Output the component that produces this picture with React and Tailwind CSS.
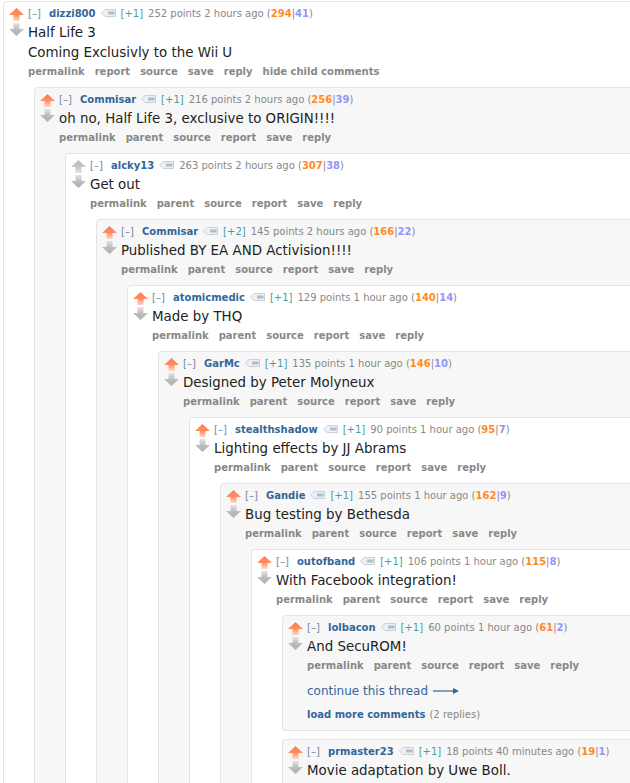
import React from "react";

function UpArrow({ on = true }) {
  const id = on ? "upOn" : "upOff";
  return (
    <svg width="15" height="14" viewBox="0 0 15 14" className="block">
      <defs>
        <linearGradient id={id} x1="0" y1="0" x2="0" y2="1">
          <stop offset="0" stopColor={on ? "#ff7f50" : "#bdbdbd"} />
          <stop offset="0.5" stopColor={on ? "#ff8b60" : "#c4c4c4"} />
          <stop offset="1" stopColor={on ? "#ffd9c8" : "#e6e6e6"} />
        </linearGradient>
      </defs>
      <polygon points="7.5,0 15,7 10.5,7 10.5,13 4.5,13 4.5,7 0,7" fill={`url(#${id})`} />
    </svg>
  );
}

function DownArrow() {
  return (
    <svg width="15" height="14" viewBox="0 0 15 14" className="block">
      <defs>
        <linearGradient id="dnG" x1="0" y1="0" x2="0" y2="1">
          <stop offset="0" stopColor="#e4e4e4" />
          <stop offset="0.5" stopColor="#bcbcbc" />
          <stop offset="1" stopColor="#b0b0b0" />
        </linearGradient>
      </defs>
      <polygon points="4.5,0 10.5,0 10.5,6 15,6 7.5,13 0,6 4.5,6" fill="url(#dnG)" />
    </svg>
  );
}

function TagIcon() {
  return (
    <svg width="15" height="8" viewBox="0 0 15 8" className="block shrink-0">
      <path d="M4 0.5 H14.5 V7.5 H4 L0.5 4 Z" fill="#eef1f4" stroke="#c9d0d8" strokeWidth="1" />
      <rect x="7" y="2.5" width="6.5" height="3" fill="#aebdcc" />
    </svg>
  );
}

function LongArrow() {
  return (
    <svg width="26" height="8" viewBox="0 0 26 8" className="block">
      <line x1="0" y1="4" x2="21" y2="4" stroke="#336699" strokeWidth="1.2" />
      <polygon points="20,1 26,4 20,7" fill="#336699" />
    </svg>
  );
}

const data = {
  user: "dizzi800",
  plus: "+1",
  meta: "252 points 2 hours ago",
  up: "294",
  down: "41",
  body: ["Half Life 3", "Coming Exclusivly to the Wii U"],
  top: true,
  children: [
    {
      user: "Commisar",
      plus: "+1",
      meta: "216 points 2 hours ago",
      up: "256",
      down: "39",
      body: ["oh no, Half Life 3, exclusive to ORIGIN!!!!"],
      children: [
        {
          user: "alcky13",
          plus: null,
          off: true,
          meta: "263 points 2 hours ago",
          up: "307",
          down: "38",
          body: ["Get out"],
          children: [
            {
              user: "Commisar",
              plus: "+2",
              meta: "145 points 2 hours ago",
              up: "166",
              down: "22",
              body: ["Published BY EA AND Activision!!!!"],
              children: [
                {
                  user: "atomicmedic",
                  plus: "+1",
                  meta: "129 points 1 hour ago",
                  up: "140",
                  down: "14",
                  body: ["Made by THQ"],
                  children: [
                    {
                      user: "GarMc",
                      plus: "+1",
                      meta: "135 points 1 hour ago",
                      up: "146",
                      down: "10",
                      body: ["Designed by Peter Molyneux"],
                      children: [
                        {
                          user: "stealthshadow",
                          plus: "+1",
                          meta: "90 points 1 hour ago",
                          up: "95",
                          down: "7",
                          body: ["Lighting effects by JJ Abrams"],
                          children: [
                            {
                              user: "Gandie",
                              plus: "+1",
                              meta: "155 points 1 hour ago",
                              up: "162",
                              down: "9",
                              body: ["Bug testing by Bethesda"],
                              children: [
                                {
                                  user: "outofband",
                                  plus: "+1",
                                  meta: "106 points 1 hour ago",
                                  up: "115",
                                  down: "8",
                                  body: ["With Facebook integration!"],
                                  children: [
                                    {
                                      user: "lolbacon",
                                      plus: "+1",
                                      meta: "60 points 1 hour ago",
                                      up: "61",
                                      down: "2",
                                      body: ["And SecuROM!"],
                                      more: true,
                                      children: [],
                                    },
                                    {
                                      user: "prmaster23",
                                      plus: "+1",
                                      meta: "18 points 40 minutes ago",
                                      up: "19",
                                      down: "1",
                                      body: ["Movie adaptation by Uwe Boll."],
                                      noButtons: true,
                                      children: [],
                                    },
                                  ],
                                },
                              ],
                            },
                          ],
                        },
                      ],
                    },
                  ],
                },
              ],
            },
          ],
        },
      ],
    },
  ],
};

function Comment({ c, level }) {
  const bg = level % 2 ? "bg-[#f7f7f7]" : "bg-white";
  const buttons = c.top
    ? ["permalink", "report", "source", "save", "reply", "hide child comments"]
    : ["permalink", "parent", "source", "report", "save", "reply"];
  return (
    <div
      className={`${bg} flex border border-r-0 border-[#e4e4e4] rounded-l-[4px] pl-[5px] pt-[3px] pb-[8px]`}
    >
      <div className="w-[15px] shrink-0 flex flex-col gap-[1px] mt-[3px]">
        <UpArrow on={!c.off} />
        <DownArrow />
      </div>
      <div className="ml-[4px] flex-1 min-w-0">
        <div className="h-[16px] flex items-center gap-[5px] text-[10px] whitespace-nowrap">
          <span className="w-[16px] text-[#7189a3]">[–]</span>
          <span className="font-bold text-[#336699]">{c.user}</span>
          <TagIcon />
          {c.plus && <span className="text-[#4d9aa0]">[{c.plus}]</span>}
          <span className="text-[#888888]">
            {c.meta} (<span className="font-bold text-[#ff8b24]">{c.up}</span>|
            <span className="font-bold text-[#9494ff]">{c.down}</span>)
          </span>
        </div>
        <div className="mt-[2px] text-[13.4px] leading-[20px] text-[#222222]">
          {c.body.map((p, i) => (
            <p key={i} className="whitespace-nowrap">{p}</p>
          ))}
        </div>
        {!c.noButtons && (
          <div className="h-[16px] flex items-center gap-[10px] text-[10px] font-bold text-[#888888] whitespace-nowrap">
            {buttons.map((b) => (
              <span key={b}>{b}</span>
            ))}
          </div>
        )}
        {c.more && (
          <>
            <div className="mt-[9px] h-[18px] flex items-center gap-[5px] text-[12px] text-[#336699]">
              <span>continue this thread</span>
              <LongArrow />
            </div>
            <div className="mt-[6px] h-[16px] flex items-center gap-[4px] text-[10px] whitespace-nowrap">
              <span className="font-bold text-[#336699]">load more comments</span>
              <span className="text-[#888888]">(2 replies)</span>
            </div>
          </>
        )}
        {c.children.length > 0 && (
          <div className="ml-[6px]">
            {c.children.map((ch, i) => (
              <div key={i} className="mt-[8px]">
                <Comment c={ch} level={level + 1} />
              </div>
            ))}
          </div>
        )}
      </div>
    </div>
  );
}

export default function App() {
  return (
    <div className="w-[630px] h-[783px] overflow-hidden bg-white font-['DejaVu_Sans',Verdana,sans-serif]">
      <div className="ml-[3px] mt-[1px]">
        <Comment c={data} level={0} />
      </div>
    </div>
  );
}
